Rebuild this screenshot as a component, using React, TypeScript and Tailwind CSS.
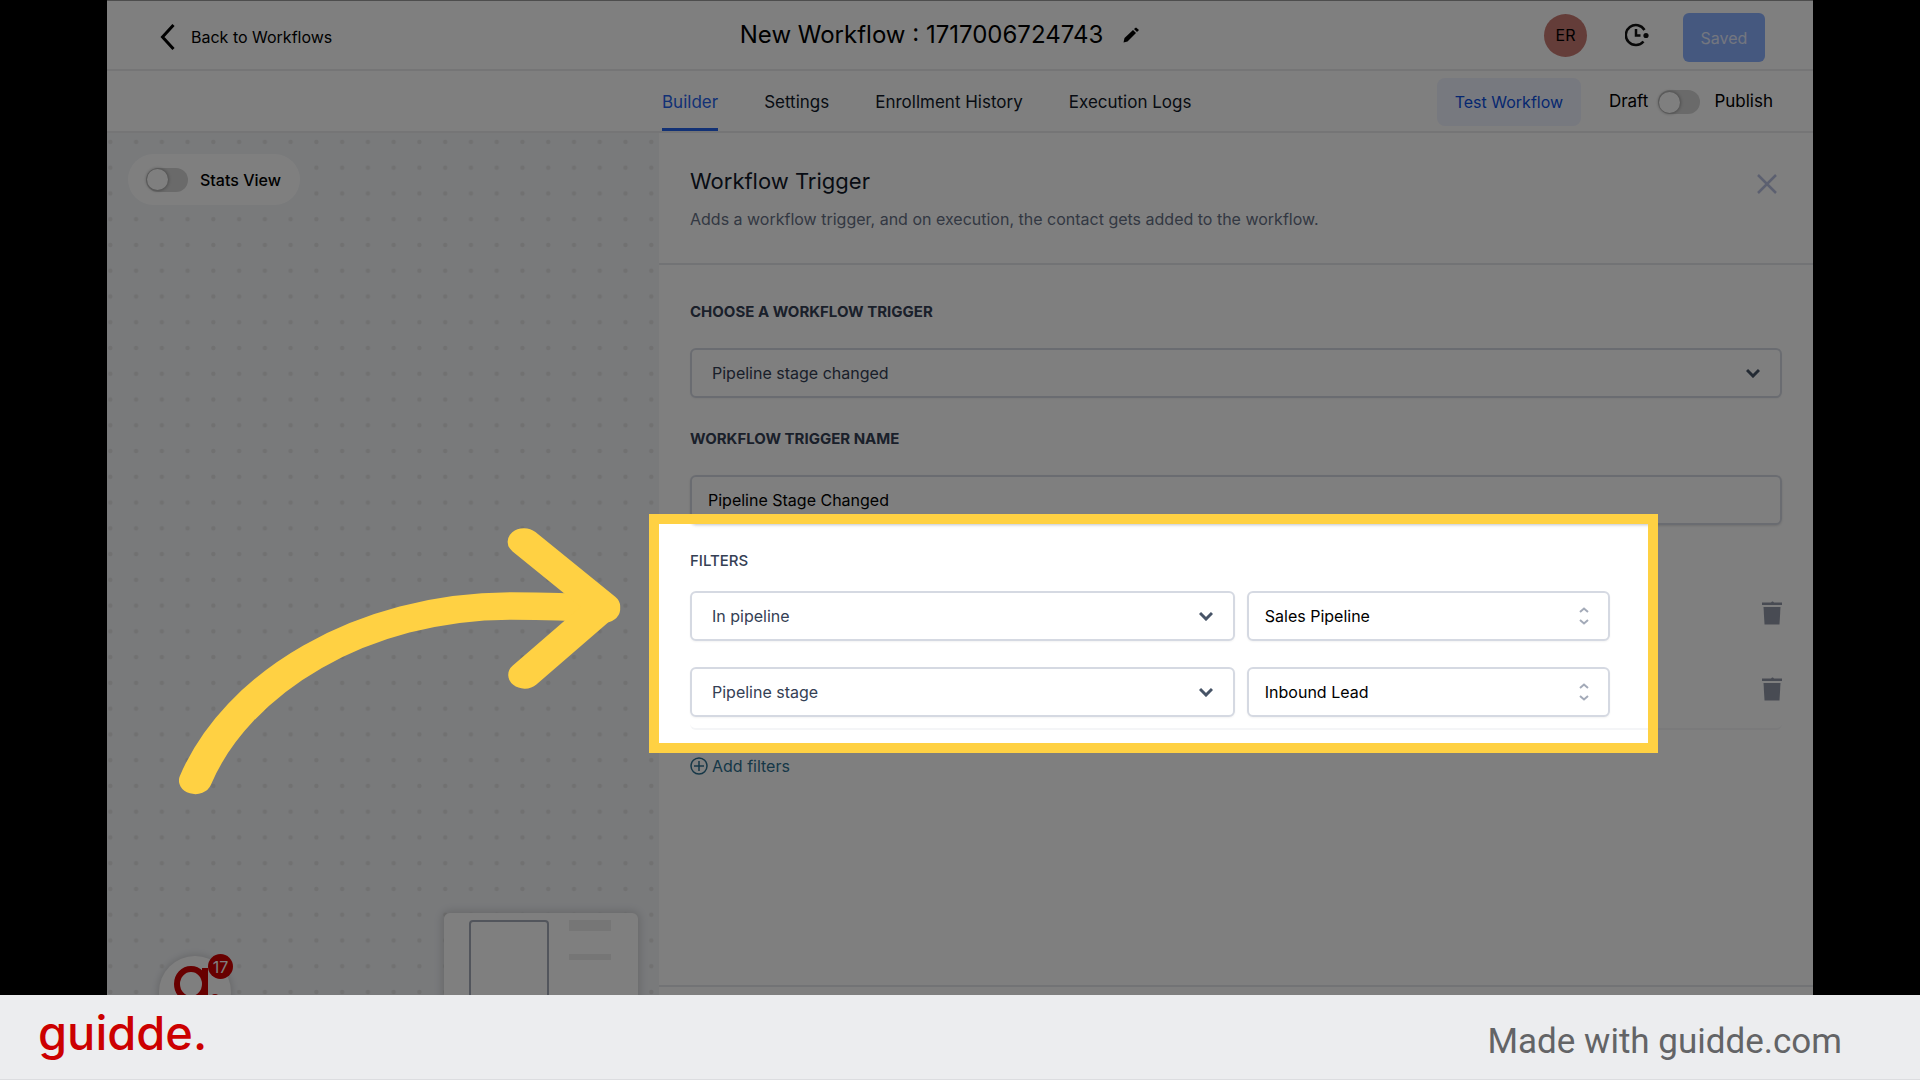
import { ReactNode } from 'react'

const triggers = ['Pipeline stage changed', 'Contact created']

const filters = [
  { field: 'In pipeline', value: 'Sales Pipeline' },
  { field: 'Pipeline stage', value: 'Inbound Lead' },
]

const tabs = ['Builder', 'Settings', 'Enrollment History', 'Execution Logs']

function Toggle({ id }: { id: string }) {
  return (
    <input
      id={id}
      type="checkbox"
      role="switch"
      className="flex h-6 w-[42px] appearance-none items-center rounded-full bg-[#d4d4d4] px-px before:size-[21px] before:rounded-full before:bg-white before:shadow-[0_0_3px_1px_rgba(0,0,0,0.25)]"
    />
  )
}

function ChevronDown() {
  return (
    <svg className="pointer-events-none absolute right-[22px] h-[10px] w-[14px]" viewBox="0 0 14 10" fill="none" stroke="#475467" strokeWidth="3">
      <path d="M1 2l6 6 6-6" />
    </svg>
  )
}

function UpDown() {
  return (
    <svg className="pointer-events-none absolute right-5 h-[18px] w-3" viewBox="0 0 12 18" fill="none" stroke="#a3aab8" strokeWidth="2">
      <path d="M2 5l4-3.500 4 3.500M2 13l4 3.500 4-3.500" />
    </svg>
  )
}

function SelectBox({ id, label, options, className, icon }: { id: string; label?: string; options: string[]; className: string; icon: ReactNode }) {
  return (
    <div className="relative flex items-center">
      <select
        id={id}
        aria-label={label}
        className={'h-[50px] w-full appearance-none rounded-md border-2 border-[#d5d9e2] bg-white shadow-xs ' + className}
      >
        {options.map((option) => (
          <option key={option}>{option}</option>
        ))}
      </select>
      {icon}
    </div>
  )
}

function Trash() {
  return (
    <svg className="h-6 w-5" viewBox="0 0 20 24" fill="#9197a6">
      <path d="M6 1.5h3L10 0.5h1l1 1h8v2.500H0v-2.500z" />
      <path d="M1.500 6h17l-1 17.500h-15z" />
    </svg>
  )
}

function Header() {
  return (
    <header className="flex h-[71px] items-center justify-between border-t border-b-2 border-t-[#9a9a9a] border-b-[#eaeaec] pr-12 pl-[53px]">
      <a href="#workflows" className="flex w-[474px] items-center gap-4 pt-[3px] text-base text-black">
        <svg className="h-[26px] w-[15px]" viewBox="0 0 15 26" fill="none" stroke="currentColor" strokeWidth="3">
          <path d="M13.500 1L2.500 13l11 12" />
        </svg>
        Back to Workflows
      </a>
      <div className="flex items-center gap-5">
        <h1 className="text-2xl text-black">New Workflow : 1717006724743</h1>
        <button aria-label="Rename workflow">
          <svg className="size-4" viewBox="0 0 16 16">
            <path d="M0.500 15.500l1-4.500 8.500-8 3 3-8.500 8.500z" />
            <path d="M11 2l2-1.500 3 2.500-2 2z" />
          </svg>
        </button>
      </div>
      <div className="flex w-[520px] items-center justify-end">
        <span className="flex size-[43px] items-center justify-center rounded-full bg-[#c97a72] text-base text-black">ER</span>
        <button aria-label="Version history" className="ml-[38px]">
          <svg className="size-6" viewBox="0 0 24 24" fill="none" stroke="#111" strokeWidth="2.500">
            <path d="M19.500 7A10 10 0 1 0 18.500 18.500" />
            <path d="M11 6v6.500h4.500" />
            <circle cx="21" cy="12.500" r="2.600" fill="#111" stroke="none" />
          </svg>
        </button>
        <button className="mt-[5px] ml-[34px] h-[49px] w-[82px] rounded-md bg-[#8ab0ff] text-base text-[#e6edff]">Saved</button>
      </div>
    </header>
  )
}

function TabBar() {
  return (
    <div className="flex h-[62px] items-center border-b-2 border-[#eaeaec] pr-10 pl-[555px]">
      <nav className="flex h-full gap-[46px] text-[17px]">
        {tabs.map((tab, i) => (
          <a
            key={tab}
            href={'#' + tab.toLowerCase().replace(' ', '-')}
            className={i === 0 ? 'flex items-center border-b-3 border-[#2563eb] pt-[6px] text-[#2563eb]' : 'flex items-center pt-[3px] text-[#101828]'}
          >
            {tab}
          </a>
        ))}
      </nav>
      <div className="ml-auto flex items-center pt-[2px] text-[17px] text-black">
        <button className="h-12 w-[144px] rounded-lg bg-[#eff2ff] text-base text-[#0b4fe0]">Test Workflow</button>
        <label htmlFor="publish" className="ml-7 flex items-center gap-[10px]">
          Draft
          <Toggle id="publish" />
          <span className="ml-1">Publish</span>
        </label>
      </div>
    </div>
  )
}

function Canvas() {
  return (
    <section className="relative overflow-hidden bg-[#f2f4f7]">
      <svg className="absolute inset-0 size-full">
        <defs>
          <pattern id="dots" width="25.76" height="25.76" patternUnits="userSpaceOnUse">
            <circle cx="3.300" cy="9" r="2.200" fill="#e2e2e2" />
          </pattern>
        </defs>
        <rect width="100%" height="100%" fill="url(#dots)" />
      </svg>
      <label htmlFor="stats" className="absolute top-[21px] left-[21px] flex h-[51px] w-[172px] items-center gap-3 rounded-full bg-white pl-[18px] text-base font-medium text-black">
        <Toggle id="stats" />
        Stats View
      </label>

      {/* Minimap */}
      <div className="absolute -bottom-5 left-[337px] flex h-[102px] w-[194px] gap-5 rounded-md bg-white px-[25px] pt-[7px] shadow-[0_0_8px_2px_rgba(0,0,0,0.14)]">
        <div className="h-full w-20 rounded-sm border-2 border-[#a5abb8]" />
        <div className="flex flex-col gap-[23px]">
          <div className="h-[11px] w-[42px] bg-[#ececec]" />
          <div className="h-[6px] w-[42px] bg-[#ececec]" />
        </div>
      </div>

      {/* Recorder bubble */}
      <button className="absolute -bottom-[33px] left-[52px] h-[72px] w-[72px] rounded-full bg-white shadow-[0_0_6px_2px_rgba(0,0,0,0.12)]">
        <svg className="absolute top-[10px] left-[14px] size-12" viewBox="0 0 48 48" fill="none" stroke="#d10000" strokeWidth="6">
          <ellipse cx="18" cy="18" rx="14" ry="15" />
          <path d="M32 2v34" />
          <circle cx="42" cy="32" r="4" fill="#d10000" stroke="none" />
        </svg>
        <span className="absolute -top-[2px] left-[49px] flex size-[25px] items-center justify-center rounded-full bg-[#d10000] text-base text-white">17</span>
      </button>
    </section>
  )
}

function Highlight() {
  return (
    <div className="pointer-events-none absolute -top-[19px] right-[124px] -left-[41px] z-10 h-[239px] border-10 border-[#ffd143] shadow-[0_0_0_2400px_rgba(0,0,0,0.5)]" />
  )
}

function Arrow() {
  return (
    <svg className="pointer-events-none absolute top-[528px] left-[72px] z-20 h-[267px] w-[442px]" viewBox="0 0 442 267" fill="none" stroke="#ffd143" strokeWidth="27.300" strokeLinecap="round" strokeLinejoin="round">
      {/* drawn on a narrower grid so the caps come out oval */}
      <g transform="scale(1.2 1)">
        <path d="M13.600 252.500C48 155 152 78 277 78Q318 78 354 81" />
        <path d="M287.500 13.800L354 78.500L288 147" />
      </g>
    </svg>
  )
}

function TriggerPanel() {
  return (
    <section className="bg-white">
      <div className="flex h-[132px] items-start justify-between border-b-2 border-[#e4e6ea] px-[31px] pt-8">
        <div>
          <h2 className="text-[22px] leading-8 text-[#101828]">Workflow Trigger</h2>
          <p className="mt-[10px] text-base leading-6 text-[#667085]">Adds a workflow trigger, and on execution, the contact gets added to the workflow.</p>
        </div>
        <button aria-label="Close" className="mt-[9px] mr-[5px]">
          <svg className="size-5" viewBox="0 0 20 20" fill="none" stroke="#b9c0e0" strokeWidth="2.500">
            <path d="M1 1l18 18M19 1L1 19" />
          </svg>
        </button>
      </div>
      <form className="px-[31px] pt-[35px] text-base">
        <label htmlFor="trigger" className="block text-[15px] leading-6 font-bold text-[#344054]">CHOOSE A WORKFLOW TRIGGER</label>
        <div className="mt-6">
          <SelectBox id="trigger" options={triggers} className="px-5 text-[#344054]" icon={<ChevronDown />} />
        </div>
        <label htmlFor="name" className="mt-[29px] block text-[15px] leading-6 font-bold text-[#344054]">WORKFLOW TRIGGER NAME</label>
        <input id="name" defaultValue="Pipeline Stage Changed" className="mt-6 block h-[50px] w-full rounded-md border-2 border-[#d5d9e2] px-4 text-black shadow-sm" />
        <fieldset className="relative mt-2 pt-4">
          <Highlight />
          <legend className="float-left w-full text-[15px] leading-6 font-medium text-[#344054]">FILTERS</legend>
          <div className="clear-both flex flex-col gap-[26px] rounded-md border-b-2 border-[#f4f5f7] pt-[18px] pb-[11px]">
            {filters.map((filter, i) => (
              <div key={filter.field} className="grid grid-cols-[6fr_4fr_160px] items-center gap-3">
                <SelectBox id={'field-' + i} label="Filter field" options={[filter.field]} className="px-5 text-[#344054]" icon={<ChevronDown />} />
                <SelectBox id={'value-' + i} label={filter.field} options={[filter.value]} className="px-4 text-black" icon={<UpDown />} />
                <button type="button" aria-label="Delete filter" className="justify-self-end pb-[6px]">
                  <Trash />
                </button>
              </div>
            ))}
          </div>
        </fieldset>
        <button type="button" className="mt-6 flex items-center gap-1 text-[#2c6f8f]">
          <svg className="size-[18px]" viewBox="0 0 18 18" fill="none" stroke="currentColor" strokeWidth="1.500">
            <circle cx="9" cy="9" r="8" />
            <path d="M9 4v10M4 9h10" />
          </svg>
          Add filters
        </button>
      </form>
    </section>
  )
}

export default function App() {
  return (
    <div className="flex h-screen flex-col bg-black font-['Inter',sans-serif]">
      <main className="relative mx-[107px] flex min-h-0 flex-1 flex-col overflow-hidden bg-white">
        <Header />
        <TabBar />
        <div className="grid min-h-0 flex-1 grid-cols-[552px_1fr]">
          <Canvas />
          <div className="flex flex-col justify-between bg-white">
            <TriggerPanel />
            <div className="h-[10px] shrink-0 border-t-2 border-[#e4e6ea]" />
          </div>
        </div>
        <Arrow />
      </main>
      <footer className="flex h-[85px] shrink-0 items-center justify-between border-b border-[#dcdde0] bg-[#ecedef] pr-[78px] pl-[38px]">
        <a href="#guidde" className="pb-[10px] text-[47px] leading-none font-medium text-[#cc0000]">guidde.</a>
        <p className="pt-2 font-['Roboto',sans-serif] text-[35px] leading-none text-[#636466]">Made with guidde.com</p>
      </footer>
    </div>
  )
}
